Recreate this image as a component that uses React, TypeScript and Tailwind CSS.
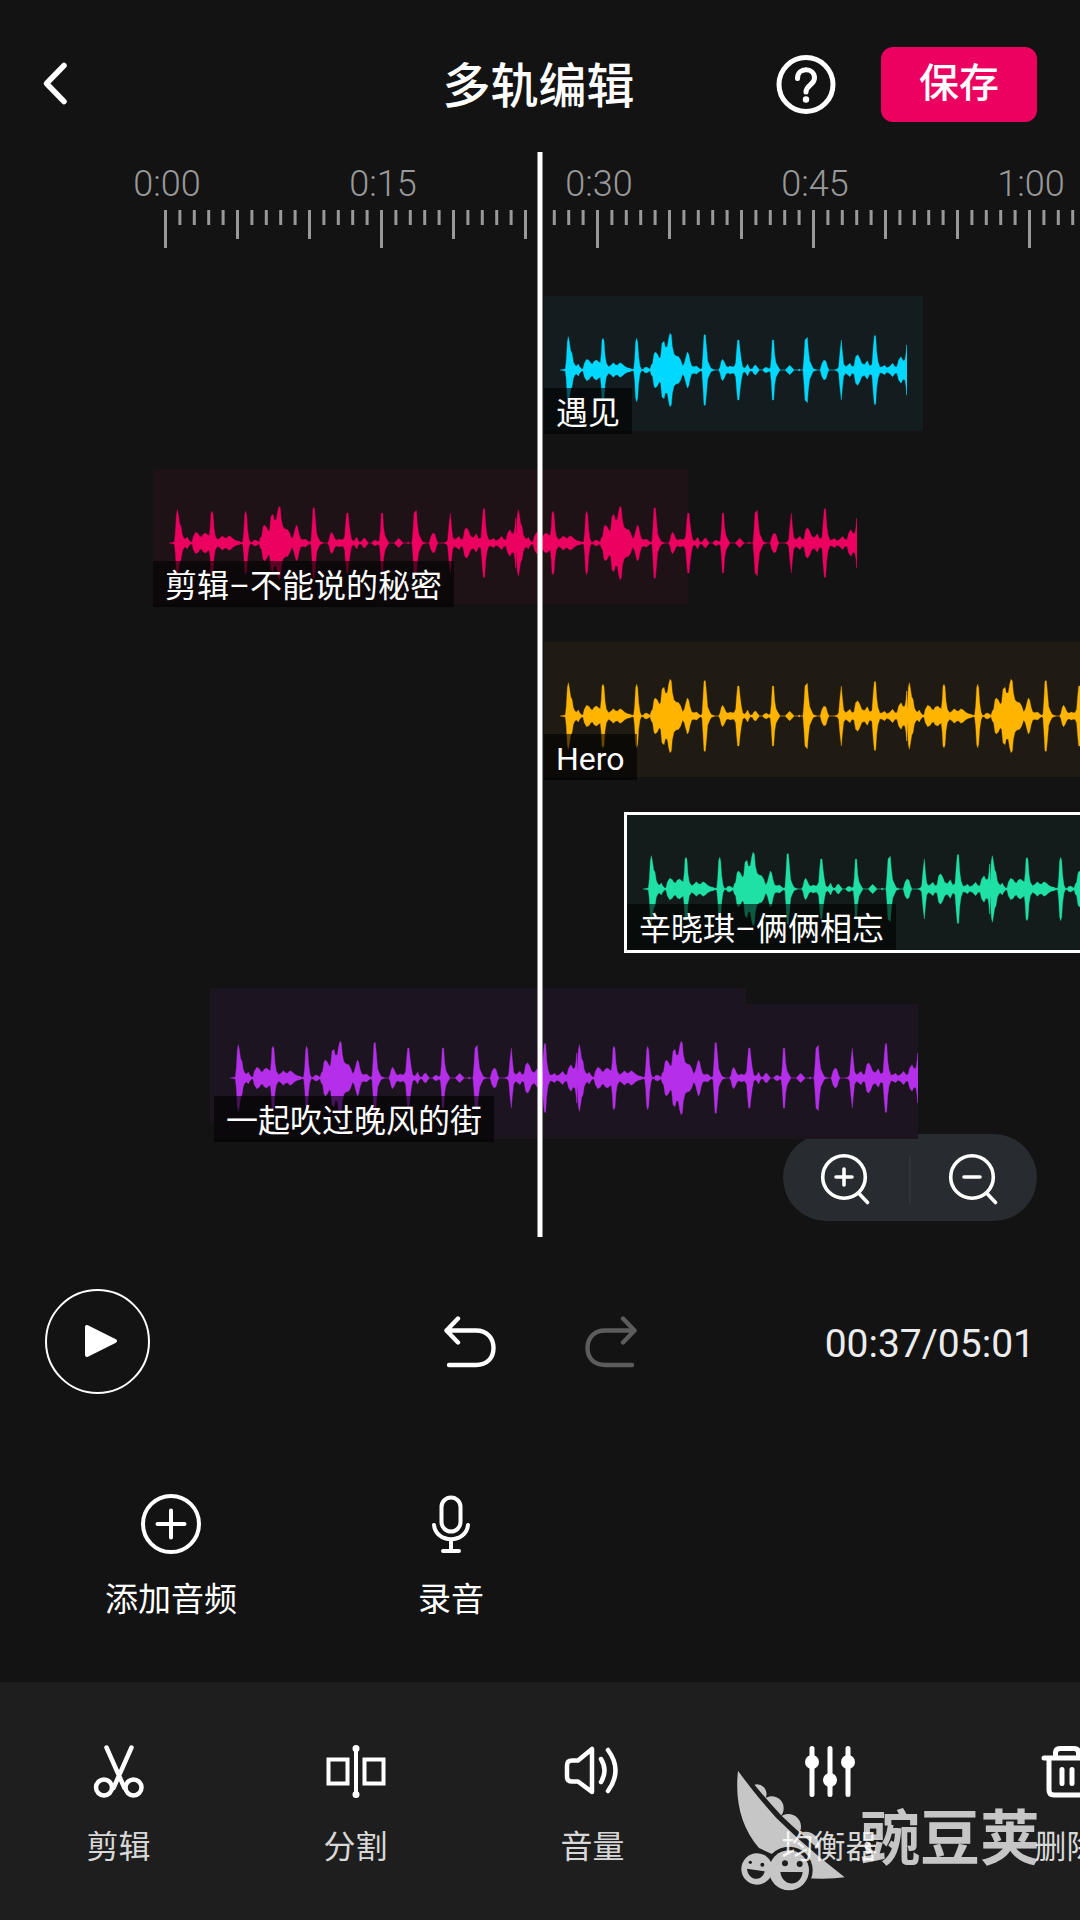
import React from 'react';

// x, height pairs for one 24 second stretch of the wave form
const PEAKS = [
  5, 1, 16, 3, 19, 30, 22, 85, 25, 100, 28, 85, 32, 58, 36, 50, 40, 25, 45, 14, 50, 12, 55, 18, 59, 10, 65, 3,
  69, 3, 73, 20, 80, 32, 88, 28, 92, 20, 98, 18, 102, 26, 110, 30, 116, 24, 121, 22, 124, 50, 126, 90, 129, 95,
  132, 88, 135, 45, 139, 20, 146, 10, 153, 14, 160, 22, 166, 16, 172, 14, 180, 22, 187, 18, 194, 11, 202, 7,
  210, 5, 216, 2, 221, 3, 224, 30, 227, 85, 230, 95, 233, 85, 236, 40, 240, 12, 244, 2, 250, 2, 253, 7, 259, 9,
  265, 6, 270, 2, 274, 15, 278, 20, 282, 48, 286, 54, 292, 48, 298, 35, 302, 40, 306, 80, 312, 86, 316, 68,
  322, 70, 326, 95, 330, 110, 334, 105, 337, 70, 342, 48, 348, 42, 356, 40, 362, 30, 368, 12, 373, 20, 378, 40,
  382, 54, 386, 48, 390, 28, 395, 12, 402, 10, 410, 12, 416, 6, 422, 2, 426, 5, 429, 50, 432, 105, 436, 106,
  439, 75, 443, 28, 448, 15, 453, 5, 459, 2, 464, 1, 465, 0, 475, 0, 476, 1, 480, 8, 484, 26, 488, 32, 493, 24,
  498, 12, 504, 8, 510, 12, 516, 10, 522, 10, 527, 20, 530, 60, 533, 90, 537, 90, 540, 60, 544, 30, 548, 10,
  553, 5, 558, 10, 563, 18, 567, 8, 571, 2, 577, 4, 582, 12, 587, 15, 592, 8, 598, 1, 599, 0, 608, 0, 609, 2,
  614, 7, 620, 8, 626, 4, 631, 6, 634, 35, 637, 90, 641, 90, 644, 45, 648, 22, 653, 12, 659, 2, 661, 0, 675, 0,
  676, 1, 683, 8, 689, 14, 695, 8, 702, 1, 703, 0, 713, 0, 714, 1, 718, 3, 721, 1, 722, 0, 728, 0, 729, 3,
  732, 40, 735, 90, 742, 98, 745, 60, 749, 28, 755, 14, 760, 4, 770, 1, 771, 0, 780, 0, 781, 2, 786, 20,
  792, 30, 798, 26, 803, 8, 807, 1, 808, 0, 823, 0, 824, 1, 832, 3, 836, 10, 840, 55, 844, 90, 847, 55, 851, 18,
  857, 10, 863, 14, 870, 20, 876, 10, 882, 12, 887, 40, 893, 46, 899, 36, 905, 20, 913, 16, 922, 28, 929, 12,
  936, 16, 940, 70, 943, 103, 947, 103, 950, 55, 954, 25, 960, 8, 967, 10, 974, 14, 980, 7, 988, 10, 998, 20,
  1005, 10, 1011, 10, 1016, 30, 1023, 40, 1029, 28, 1035, 30, 1038, 50, 1040, 75, 1041, 75,
];

const top: string[] = [];
const bottom: string[] = [];
for (let i = 0; i < PEAKS.length; i += 2) {
  top.push(`${PEAKS[i]} ${-PEAKS[i + 1]}`);
  bottom.unshift(`${PEAKS[i]} ${PEAKS[i + 1]}`);
}
const WAVE = `M0 0L${top.join('L')}L${bottom.join('L')}Z`;

const Waveform: React.FC<{ loops: number; className: string }> = ({ loops, className }) => (
  <svg
    className={`absolute left-4 top-9 max-w-none ${className}`}
    width={341 * loops + 6}
    height={76}
    viewBox={`0 -114 ${1023 * loops + 18} 228`}
    fill="currentColor"
    stroke="currentColor"
    aria-hidden="true"
  >
    {Array.from({ length: loops }, (_, i) => (
      <path key={i} d={WAVE} transform={`translate(${i * 1023} 0)`} />
    ))}
  </svg>
);

interface ClipProps {
  name: string;
  loops: number;
  box: string;
  color: string;
  label?: string;
}

const Clip: React.FC<ClipProps> = ({ name, loops, box, color, label = '-bottom-[3px]' }) => (
  <div className={`relative h-[135px] shrink-0 ${box}`}>
    <Waveform loops={loops} className={color} />
    <span className={`absolute left-0 h-[46px] whitespace-nowrap bg-black/60 px-3 text-[32px] leading-[50px] text-white ${label}`}>
      {name}
    </span>
  </div>
);

const TIMES = ['0:00', '0:15', '0:30', '0:45', '1:00'];

const Ruler: React.FC = () => (
  <div className="text-[#999]">
    <div className="flex pl-[59px] pt-3 text-[36px] font-light leading-10">
      {TIMES.map((t) => (
        <span key={t} className="w-[216px] shrink-0 text-center">{t}</span>
      ))}
    </div>
    <svg className="ml-[163px] mt-1.5 block" width="930" height="38" stroke="currentColor" strokeWidth="3" aria-hidden="true">
      {Array.from({ length: 64 }, (_, i) => {
        const x = 2.5 + i * 14.4;
        const y = i % 15 === 0 ? 38 : i % 5 === 0 ? 29 : 15;
        return <line key={i} x1={x} x2={x} y1="0" y2={y} />;
      })}
    </svg>
  </div>
);

const ZoomIcon: React.FC<{ plus?: boolean }> = ({ plus }) => (
  <svg width="52" height="54" viewBox="0 0 52 54" fill="none" stroke="currentColor" strokeWidth="3.6" strokeLinecap="round" aria-hidden="true">
    <circle cx="24" cy="24" r="21.3" />
    <path d="M39.5 41L47.5 49.5M16 24h16" />
    {plus && <path d="M24 16v16" />}
  </svg>
);

const UndoIcon: React.FC<{ className?: string }> = ({ className }) => (
  <svg className={className} width="52" height="52" viewBox="0 0 52 52" fill="none" stroke="currentColor" strokeWidth="4.4" strokeLinecap="round" strokeLinejoin="round" aria-hidden="true">
    <path d="M14 2.5L2.5 14.5L14 26.5M2.5 14.5H32C43 14.5 49.5 22 49.5 32S43 49 32 49H5" />
  </svg>
);

const ICON = {
  width: 60,
  height: 60,
  viewBox: '0 0 60 60',
  fill: 'none',
  stroke: 'currentColor',
  strokeWidth: 4,
  strokeLinecap: 'round' as const,
  strokeLinejoin: 'round' as const,
  'aria-hidden': true,
};

const TOOLS = [
  {
    name: '剪辑',
    icon: (
      <svg {...ICON} strokeWidth="4.5">
        <path d="M17.500 6.500L35.500 47M42.500 6.500L24.500 47" />
        <circle cx="15" cy="46.500" r="8" />
        <circle cx="44.500" cy="46.500" r="8" />
      </svg>
    ),
  },
  {
    name: '分割',
    icon: (
      <svg {...ICON} strokeLinejoin="miter">
        <path d="M2.500 18.500H21.500V42.500H2.500ZM38.500 18.500H57.500V42.500H38.500Z" />
        <path d="M30 8V53" />
        <circle cx="30" cy="7.500" r="1.500" />
        <circle cx="30" cy="53.500" r="1.500" />
      </svg>
    ),
  },
  {
    name: '音量',
    icon: (
      <svg {...ICON} strokeWidth="4.5">
        <path d="M29 8V51L15 40.500H9Q4 40.500 4 35.500V24.500Q4 19.500 9 19.500H15Z" />
        <path d="M38 18Q45 29.500 38 41M45 9Q60 29.500 45 50" />
      </svg>
    ),
  },
  {
    name: '均衡器',
    icon: (
      <svg {...ICON} strokeWidth="5">
        <path d="M12 7.500V53.500M30 7.500V53.500M48 7.500V53.500" />
        <g fill="currentColor" stroke="none">
          <circle cx="12" cy="21" r="7" />
          <circle cx="30" cy="39" r="7" />
          <circle cx="48" cy="21" r="7" />
        </g>
      </svg>
    ),
  },
  {
    name: '删除',
    icon: (
      <svg {...ICON} strokeWidth="5">
        <path d="M7 17H53M18.500 17V12Q18.500 7.500 23 7.500H37Q41.500 7.500 41.500 12V17M12 17V49Q12 54 17 54H43Q48 54 48 49V17M25 28.500V42.500M35 28.500V42.500" />
      </svg>
    ),
  },
];

const Watermark: React.FC = () => (
  <div className="pointer-events-none absolute right-10 top-[86px] flex items-start text-white opacity-75">
    <svg width="117" height="127" viewBox="150 320 351 381" fill="currentColor" aria-hidden="true">
      <mask id="gap">
        <rect x="150" y="320" width="351" height="381" fill="#fff" />
        <path d="M170 322Q215 385 290 466Q350 524 430 590L400 700H150V322Z" fill="#000" stroke="#000" strokeWidth="12" />
      </mask>
      <mask id="around">
        <rect x="150" y="320" width="351" height="381" fill="#fff" />
        <circle cx="222" cy="623" r="57" fill="#000" />
        <circle cx="318" cy="627" r="71" fill="#000" />
      </mask>
      <mask id="faces">
        <rect x="150" y="320" width="351" height="381" fill="#fff" />
        <g fill="#000">
          <circle cx="202" cy="603" r="5" />
          <circle cx="238" cy="610" r="6" />
          <path d="M192 622L245 630C238 662 196 660 192 622Z" />
          <circle cx="306" cy="606" r="9" />
          <circle cx="350" cy="608" r="9" />
          <path d="M292 632H359C354 678 298 678 292 632Z" />
        </g>
      </mask>
      <g mask="url(#gap)">
        <circle cx="222" cy="398" r="29" />
        <circle cx="266" cy="441" r="36" />
        <circle cx="316" cy="496" r="38" />
        <circle cx="368" cy="551" r="40" />
      </g>
      <path mask="url(#around)" d="M165 328Q210 392 280 470Q345 534 410 588L485 648Q435 655 360 650L265 577L228 560Q150 470 165 328Z" />
      <g mask="url(#faces)">
        <circle cx="222" cy="623" r="47" />
        <circle cx="318" cy="627" r="60" />
      </g>
    </svg>
    <span className="ml-2.5 mt-9 text-[60px] font-bold leading-[72px]">豌豆荚</span>
  </div>
);

const App: React.FC = () => {
  return (
    <div className="flex min-h-screen flex-col overflow-hidden bg-[#131313] text-white [font-family:Roboto,'Noto_Sans_CJK_SC',sans-serif]">
      <header className="grid h-[152px] grid-cols-[1fr_auto_1fr] items-center pl-10 pr-[43px] pt-4">
        <button type="button" aria-label="返回" className="justify-self-start">
          <svg width="32" height="48" viewBox="0 0 32 48" fill="none" stroke="currentColor" strokeWidth="5.500" strokeLinecap="round" strokeLinejoin="round" aria-hidden="true">
            <path d="M24 5.500L6.500 23.500L24 41.500" />
          </svg>
        </button>
        <h1 className="pt-1.5 text-[48px] font-medium leading-[64px]">多轨编辑</h1>
        <div className="flex items-center gap-[45px] justify-self-end">
          <button type="button" aria-label="帮助">
            <svg width="60" height="60" viewBox="0 0 60 60" fill="none" stroke="currentColor" strokeWidth="5" strokeLinecap="round" aria-hidden="true">
              <circle cx="30" cy="30.500" r="27" />
              <path d="M21.500 24.500C21.500 12.500 38.500 13 38.500 24C38.500 31 30 31 30 38" />
              <circle cx="30" cy="45.500" r="3.200" fill="currentColor" stroke="none" />
            </svg>
          </button>
          <button type="button" className="h-[75px] w-[156px] rounded-xl bg-[#ec0060] text-[40px] font-medium leading-[56px]">保存</button>
        </div>
      </header>

      <main className="relative h-[1085px] overflow-hidden">
        <Ruler />
        <div className="absolute bottom-4 right-[43px] flex h-[87px] w-[254px] items-center justify-center gap-[37px] rounded-full bg-[#282b30] pt-1">
          <button type="button" aria-label="放大"><ZoomIcon plus /></button>
          <span className="h-12 w-0.5 bg-[#303338]" />
          <button type="button" aria-label="缩小"><ZoomIcon /></button>
        </div>
        <div className="relative flex flex-col gap-[38px] pt-12">
          <Clip name="遇见" loops={1} box="ml-[544px] w-[379px] bg-[#131d1f]" color="text-[#00d8ff]" />
          <Clip name="剪辑–不能说的秘密" loops={2} box="ml-[153px] w-[535px] bg-[#1f1217]" color="text-[#ec0060]" />
          <Clip name="Hero" loops={2} box="ml-[544px] w-[704px] bg-[#1f1a12]" color="text-[#ffb400]" />
          <Clip name="辛晓琪–俩俩相忘" loops={2} box="ml-[627px] w-[704px] bg-[#131c1a] outline-[3px] outline-white" color="text-[#1fe0a5]" label="bottom-0" />
          <div className="ml-[210px] h-[135px] w-[536px] bg-[#1c151f] pl-1 pt-4">
            <Clip name="一起吹过晚风的街" loops={2} box="w-[704px] bg-[#1c151f]" color="text-[#b52fea]" />
          </div>
        </div>
        <div className="absolute inset-y-0 left-1/2 w-[5px] -translate-x-1/2 bg-white" />
      </main>

      <section className="mt-[52px] grid grid-cols-3 items-center px-[45px]">
        <button type="button" aria-label="播放" className="flex size-[105px] items-center justify-center rounded-full border-2 border-white">
          <svg className="ml-1.5" width="34" height="36" viewBox="0 0 34 36" fill="currentColor" stroke="currentColor" strokeWidth="4" strokeLinejoin="round" aria-hidden="true">
            <path d="M3 3V31L31 17Z" />
          </svg>
        </button>
        <div className="flex justify-center gap-[89px]">
          <button type="button" aria-label="撤销"><UndoIcon /></button>
          <button type="button" aria-label="重做" className="text-[#5c5c5c]" disabled><UndoIcon className="-scale-x-100" /></button>
        </div>
        <p className="pt-1 text-right text-[39px] leading-[48px] text-[#ececec]">00:37/05:01</p>
      </section>

      <section className="mt-[100px] flex pl-[31px] text-[33px] leading-[48px]">
        <button type="button" className="flex w-[280px] flex-col items-center gap-[22px]">
          <svg {...ICON}>
            <circle cx="30" cy="30" r="28" />
            <path d="M30 16.500V43.500M16.500 30H43.500" />
          </svg>
          添加音频
        </button>
        <button type="button" className="flex w-[280px] flex-col items-center gap-[22px]">
          <svg {...ICON}>
            <rect x="20.500" y="3.500" width="19" height="34" rx="9.500" />
            <path d="M13 31C15 50 45 50 47 31M30 46V56M22 57H38" />
          </svg>
          录音
        </button>
      </section>

      <nav className="relative mt-auto flex h-[238px] overflow-hidden bg-[#1e1e1e]">
        {TOOLS.map((tool) => (
          <button key={tool.name} type="button" className="flex w-[237px] shrink-0 flex-col items-center gap-[22px] pt-[59px] text-[32px] leading-[48px]">
            {tool.icon}
            <span className="text-[#d8d8d8]">{tool.name}</span>
          </button>
        ))}
        <Watermark />
      </nav>
    </div>
  );
};

export default App;
